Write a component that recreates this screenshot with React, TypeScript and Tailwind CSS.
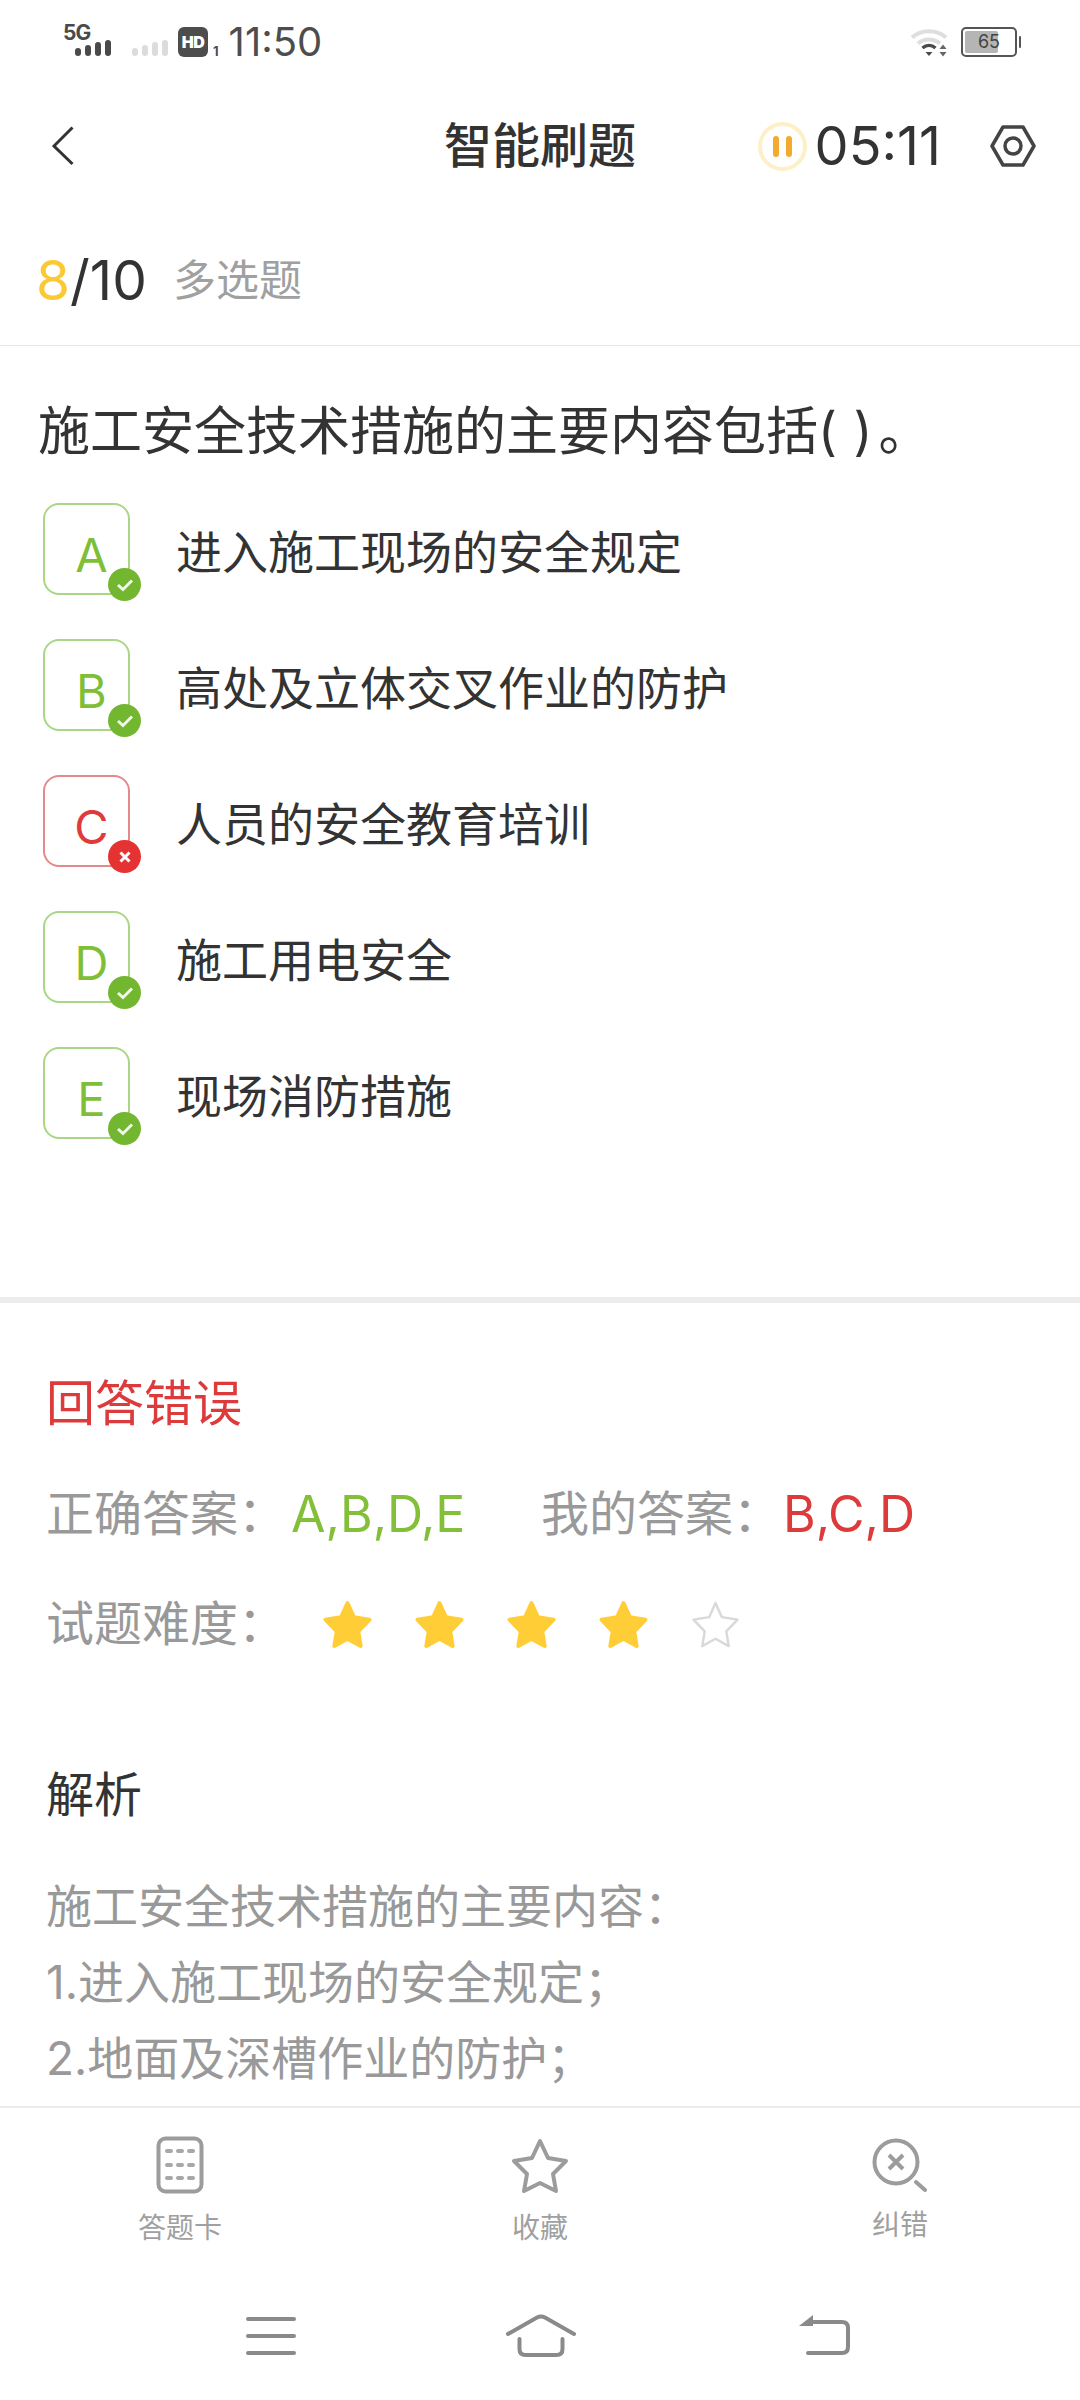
const options = [
  { letter: "A", text: "进入施工现场的安全规定", ok: true },
  { letter: "B", text: "高处及立体交叉作业的防护", ok: true },
  { letter: "C", text: "人员的安全教育培训", ok: false },
  { letter: "D", text: "施工用电安全", ok: true },
  { letter: "E", text: "现场消防措施", ok: true },
];

const starPoints = "25.5,3 32,17.5 48,20 36.5,32 39,47 25.5,39.5 12,47 14.5,32 3,20 19,17.5";

function SignalBars({ color }: { color: string }) {
  return (
    <svg width="36" height="16" viewBox="0 0 36 16" fill={color}>
      <rect x="0" y="8" width="6" height="8" rx="3" />
      <rect x="10" y="5" width="6" height="11" rx="3" />
      <rect x="20" y="2" width="6" height="14" rx="3" />
      <rect x="30" y="0" width="6" height="16" rx="3" />
    </svg>
  );
}

function StatusBar() {
  return (
    <div className="flex h-[85px] items-start justify-between pl-[63px] pr-[59px] pt-[25px]">
      <div className="flex items-start">
        <div className="relative h-[32px] w-[47px]">
          <span className="absolute left-0 top-[-2px] text-[21px] font-bold leading-[20px] tracking-[-1px] text-[#4a4a4a]">5G</span>
          <div className="absolute left-[12px] top-[15px]">
            <SignalBars color="#4a4a4a" />
          </div>
        </div>
        <div className="ml-[22px] mt-[15px]">
          <SignalBars color="#dcdcdc" />
        </div>
        <div className="ml-[10px] mt-[2px] flex h-[30px] w-[30px] items-center justify-center rounded-[6px] bg-[#4d4d4d] text-[16px] font-black leading-none tracking-[-0.5px] text-white">
          HD
        </div>
        <span className="ml-[5px] mt-[20px] text-[13px] font-bold leading-[12px] text-[#4d4d4d]">1</span>
        <span className="ml-[10px] text-[40px] leading-[34px] text-[#4d4d4d]">11:50</span>
      </div>
      <div className="flex items-start">
        <svg width="40" height="30" viewBox="0 0 40 30" className="mt-[3px]" fill="none">
          <path d="M2 9.5C11 1 27 1 36 9.5" stroke="#dedede" strokeWidth="4" />
          <path d="M8 15.5C14 10 24 10 30 15.5" stroke="#dedede" strokeWidth="4" />
          <path d="M12.5 20C16.5 16.5 21.5 16.5 25.5 20" stroke="#4a4a4a" strokeWidth="3.5" />
          <path d="M15.5 24H22.5L19 28Z" fill="#4a4a4a" />
          <path d="M33 16.5L36.5 21H29.5Z" fill="#666" />
          <path d="M29.5 24H36.5L33 28.5Z" fill="#666" />
        </svg>
        <div className="relative ml-[11px] mr-[4px] mt-[2px] h-[30px] w-[56px] rounded-[5px] border-2 border-[#555] p-[2px]">
          <div className="h-full w-[33px] rounded-[2px] bg-[#b5b5b5]" />
          <span className="absolute inset-0 flex items-center justify-center text-[18px] leading-none text-[#444]">65</span>
          <div className="absolute right-[-6px] top-[7px] h-[12px] w-[2px] rounded-full bg-[#555]" />
        </div>
      </div>
    </div>
  );
}

function Header() {
  return (
    <div className="grid h-[122px] grid-cols-[1fr_auto_1fr] items-center pl-[52px] pr-[44px]">
      <svg width="22" height="40" viewBox="0 0 22 40" fill="none">
        <path d="M20.5 1.5L2 20L20.5 38" stroke="#333" strokeWidth="3" />
      </svg>
      <div className="mr-[8px] text-[48px] font-medium leading-[64px] text-[#333]">智能刷题</div>
      <div className="flex items-center justify-end">
        <div className="flex h-[49px] w-[49px] items-center justify-center gap-[7px] rounded-full border-[4px] border-[#fdf0c8]">
          <div className="h-[21px] w-[6px] rounded-full bg-[#f4a92f]" />
          <div className="h-[21px] w-[6px] rounded-full bg-[#f4a92f]" />
        </div>
        <span className="ml-[8px] text-[54px] leading-[64px] text-[#333]">05:11</span>
        <svg width="46" height="44" viewBox="0 0 46 44" fill="none" className="ml-[49px]">
          <path d="M13 3H33L44 22L33 41H13L2 22Z" stroke="#444" strokeWidth="3.5" strokeLinejoin="round" />
          <circle cx="23" cy="22" r="8" stroke="#444" strokeWidth="3.5" />
        </svg>
      </div>
    </div>
  );
}

function OptionRow({ letter, text, ok }: { letter: string; text: string; ok: boolean }) {
  return (
    <div className="flex h-[92px] items-center">
      <div
        className={`relative flex h-[92px] w-[87px] items-center justify-center rounded-[16px] border-2 pl-[10px] pt-[10px] text-[47px] leading-none ${
          ok ? "border-[#a9d785] text-[#7fbf38]" : "border-[#e58a8a] text-[#e03a3a]"
        }`}
      >
        {letter}
        <div
          className={`absolute right-[-13px] top-[63px] flex h-[33px] w-[33px] items-center justify-center rounded-full ${
            ok ? "bg-[#72b72f]" : "bg-[#e53232]"
          }`}
        >
          {ok ? (
            <svg width="18" height="14" viewBox="0 0 18 14" fill="none">
              <path d="M2 7L7 11.5L16 2.5" stroke="white" strokeWidth="3" opacity="0.9" />
            </svg>
          ) : (
            <svg width="14" height="14" viewBox="0 0 14 14" fill="none">
              <path d="M2.5 2.5L11.5 11.5M11.5 2.5L2.5 11.5" stroke="white" strokeWidth="3" />
            </svg>
          )}
        </div>
      </div>
      <span className="ml-[46px] pt-[6px] text-[46px] leading-[64px] text-[#333]">{text}</span>
    </div>
  );
}

function Stars() {
  return (
    <div className="ml-[36px] flex gap-[41px]">
      {[0, 1, 2, 3, 4].map((i) => (
        <svg key={i} width="51" height="49" viewBox="0 0 51 50">
          {i < 4 ? (
            <polygon points={starPoints} fill="#ffcd36" stroke="#ffcd36" strokeWidth="4" strokeLinejoin="round" />
          ) : (
            <polygon points={starPoints} fill="white" stroke="#d9d9d9" strokeWidth="2.5" strokeLinejoin="round" />
          )}
        </svg>
      ))}
    </div>
  );
}

function BottomTabs() {
  return (
    <div className="flex h-[175px] items-start border-t-2 border-[#ececec] pt-[28px]">
      <div className="flex w-[360px] flex-col items-center text-[#a0a0a0]">
        <svg width="48" height="58" viewBox="0 0 48 58" fill="none">
          <rect x="2.5" y="2.5" width="43" height="53" rx="7" stroke="#9c9c9c" strokeWidth="4" />
          <g stroke="#a8a8a8" strokeWidth="4" strokeLinecap="round">
            <path d="M11 15H15M22 15H26M33 15H37" />
            <path d="M11 29H15M22 29H26M33 29H37" />
            <path d="M11 42H15M22 42H26M33 42H37" />
          </g>
        </svg>
        <span className="mt-[14px] text-[28px] leading-[40px]">答题卡</span>
      </div>
      <div className="flex w-[360px] flex-col items-center text-[#a0a0a0]">
        <svg width="58" height="56" viewBox="0 0 58 56" fill="none" className="mt-[2px]">
          <polygon
            points="29,3 37,20 55,23 42,36 45,53 29,45 13,53 16,36 3,23 21,20"
            stroke="#9c9c9c"
            strokeWidth="4"
            strokeLinejoin="round"
          />
        </svg>
        <span className="mt-[14px] text-[28px] leading-[40px]">收藏</span>
      </div>
      <div className="flex w-[360px] flex-col items-center text-[#a0a0a0]">
        <svg width="56" height="54" viewBox="0 0 56 54" fill="none" className="mt-[2px]">
          <circle cx="24" cy="24" r="21.5" stroke="#9c9c9c" strokeWidth="4" />
          <path d="M17 17L31 31M31 17L17 31" stroke="#9c9c9c" strokeWidth="4" />
          <path d="M44 44L53 52" stroke="#9c9c9c" strokeWidth="4" strokeLinecap="round" />
        </svg>
        <span className="mt-[13px] text-[28px] leading-[40px]">纠错</span>
      </div>
    </div>
  );
}

function NavBar() {
  return (
    <div className="flex h-[119px] items-start pl-[246px] pt-[35px]">
      <svg width="50" height="40" viewBox="0 0 50 40" fill="none" className="mt-[1px]">
        <path d="M2 2H48M2 19H48M2 36H48" stroke="#8a8a8a" strokeWidth="4" strokeLinecap="round" />
      </svg>
      <svg width="70" height="44" viewBox="0 0 70 44" fill="none" className="ml-[210px] mt-[-2px]">
        <path d="M2 20L31 3.5Q35 1.5 39 3.5L68 20" stroke="#8a8a8a" strokeWidth="4" strokeLinecap="round" />
        <path d="M13.5 25V35Q13.5 41 19.5 41H50.5Q56.5 41 56.5 35V25" stroke="#8a8a8a" strokeWidth="4" strokeLinecap="round" />
      </svg>
      <svg width="52" height="42" viewBox="0 0 52 42" fill="none" className="ml-[222px] mt-[-2px]">
        <path d="M15 1V12H1Z" fill="#8a8a8a" />
        <path d="M12 8H44Q50 8 50 14V33Q50 39 44 39H10" stroke="#8a8a8a" strokeWidth="4" strokeLinecap="round" />
      </svg>
    </div>
  );
}

export default function App() {
  return (
    <div className="flex h-[2400px] w-[1080px] flex-col overflow-hidden bg-white font-[family-name:Inter,'Noto_Sans_CJK_SC',sans-serif]">
      <StatusBar />
      <Header />

      <div className="flex h-[139px] items-center border-b border-[#e6e6e6] pl-[36px] pt-[8px]">
        <span className="text-[55px] leading-[64px] text-[#333]">
          <span className="text-[#fbc933]">8</span>/10
        </span>
        <span className="ml-[26px] text-[43px] leading-[64px] text-[#a0a0a0]">多选题</span>
      </div>

      <div className="min-h-0 flex-1">
        <div className="pl-[38px] pt-[54px] text-[52px] leading-[64px] text-[#333]">
          施工安全技术措施的主要内容包括<span className="tracking-[1px]">( )</span>
          <span className="ml-[5px]">{"\u3002"}</span>
        </div>

        <div className="mt-[39px] flex flex-col gap-[44px] pl-[43px]">
          {options.map((o) => (
            <OptionRow key={o.letter} letter={o.letter} text={o.text} ok={o.ok} />
          ))}
        </div>

        <div className="mt-[158px] h-[6px] bg-[#ececec]" />

        <div className="px-[46px] pt-[69px]">
          <div className="text-[49px] leading-[64px] text-[#dd3b3b]">回答错误</div>
          <div className="mt-[46px] flex text-[48px] leading-[64px] text-[#999]">
            <span>{"正确答案\uFF1A"}</span>
            <span className="ml-[5px] w-[250px] text-[50px] text-[#84bf3a]">A,B,D,E</span>
            <span>{"我的答案\uFF1A"}</span>
            <span className="ml-[2px] text-[50px] text-[#dd3b3b]">B,C,D</span>
          </div>
          <div className="mt-[46px] flex items-center text-[48px] leading-[64px] text-[#999]">
            <span>{"试题难度\uFF1A"}</span>
            <Stars />
          </div>
          <div className="mt-[107px] text-[48px] leading-[64px] text-[#333]">解析</div>
          <div className="mt-[41px] text-[46px] leading-[76px] text-[#999]">
            <p>{"施工安全技术措施的主要内容\uFF1A"}</p>
            <p>{"1.进入施工现场的安全规定\uFF1B"}</p>
            <p>{"2.地面及深槽作业的防护\uFF1B"}</p>
          </div>
        </div>
      </div>

      <BottomTabs />
      <NavBar />
    </div>
  );
}
